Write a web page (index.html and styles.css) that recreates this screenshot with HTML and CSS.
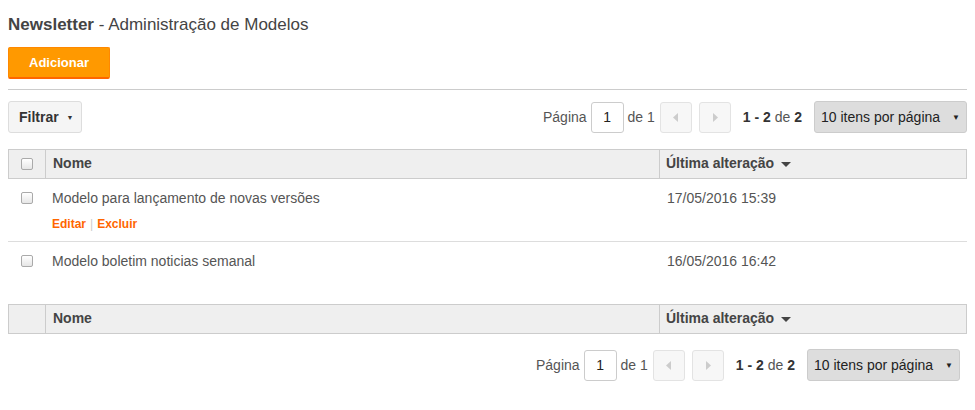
FILE: index.html
```html
<!DOCTYPE html>
<html>
<head>
<meta charset="utf-8">
<link rel="stylesheet" href="styles.css">
</head>
<body>
<h1 class="title"><b>Newsletter</b> - Administração de Modelos</h1>
<div class="actions"><button class="btn-primary">Adicionar</button></div>
<hr class="sep">
<div class="toolbar">
  <button class="btn-filter">Filtrar <span class="caret">▼</span></button>
  <div class="pager">
    <span>Página</span>
    <span class="page-input">1</span>
    <span>de 1</span>
    <span class="nav-btn"><svg width="6" height="9" viewBox="0 0 6 9"><path d="M5 0L0 4.5L5 9z" fill="#ccc"/></svg></span>
    <span class="nav-btn nav-next"><svg width="6" height="9" viewBox="0 0 6 9"><path d="M1 0L6 4.5L1 9z" fill="#ccc"/></svg></span>
    <span class="count"><b>1 - 2</b> de <b>2</b></span>
    <span class="per-page">10 itens por página <span class="sel-caret">▼</span></span>
  </div>
</div>
<div class="table">
  <div class="row head">
    <div class="c-check"><span class="cb"></span></div>
    <div class="c-name">Nome</div>
    <div class="c-date">Última alteração <svg class="sort" width="10" height="5" viewBox="0 0 10 5"><path d="M0 0H10L5 5z" fill="#444"/></svg></div>
  </div>
  <div class="row item">
    <div class="c-check"><span class="cb"></span></div>
    <div class="c-name">Modelo para lançamento de novas versões
      <div class="links"><a>Editar</a><span class="bar">|</span><a>Excluir</a></div>
    </div>
    <div class="c-date">17/05/2016 15:39</div>
  </div>
  <div class="row item last">
    <div class="c-check"><span class="cb"></span></div>
    <div class="c-name">Modelo boletim noticias semanal</div>
    <div class="c-date">16/05/2016 16:42</div>
  </div>
  <div class="row head foot">
    <div class="c-check"></div>
    <div class="c-name">Nome</div>
    <div class="c-date">Última alteração <svg class="sort" width="10" height="5" viewBox="0 0 10 5"><path d="M0 0H10L5 5z" fill="#444"/></svg></div>
  </div>
</div>
<div class="toolbar bottom">
  <div class="pager">
    <span>Página</span>
    <span class="page-input">1</span>
    <span>de 1</span>
    <span class="nav-btn"><svg width="6" height="9" viewBox="0 0 6 9"><path d="M5 0L0 4.5L5 9z" fill="#ccc"/></svg></span>
    <span class="nav-btn nav-next"><svg width="6" height="9" viewBox="0 0 6 9"><path d="M1 0L6 4.5L1 9z" fill="#ccc"/></svg></span>
    <span class="count"><b>1 - 2</b> de <b>2</b></span>
    <span class="per-page">10 itens por página <span class="sel-caret">▼</span></span>
  </div>
</div>
</body>
</html>
```
FILE: styles.css
```css
* { box-sizing: border-box; }
body {
  margin: 8px;
  font-family: "Liberation Sans", Arial, sans-serif;
  font-size: 14px;
  color: #444;
  background: #fff;
}
.title {
  margin: 6px 0 0;
  font-size: 17px;
  font-weight: normal;
  line-height: 22px;
  color: #444;
}
.title b { font-weight: bold; }
.actions { margin-top: 11px; }
.btn-primary {
  display: block;
  width: 102px;
  height: 32px;
  background: #f90;
  border: 1px solid #f80;
  border-bottom: 2px solid #f60;
  border-radius: 2px;
  color: #fff;
  font-family: inherit;
  font-weight: bold;
  font-size: 13px;
  padding: 0;
}
.sep {
  margin: 10px 0 0;
  border: 0;
  border-top: 1px solid #ccc;
}
.toolbar {
  display: flex;
  justify-content: space-between;
  align-items: center;
  margin-top: 11px;
  height: 32px;
}
.btn-filter {
  height: 32px;
  width: 74px;
  background: #f5f5f5;
  border: 1px solid #ddd;
  border-radius: 3px;
  font-family: inherit;
  font-weight: bold;
  font-size: 14px;
  color: #333;
  text-align: left;
  padding: 0 0 0 10px;
}
.caret { font-size: 7px; margin-left: 4px; vertical-align: 2px; }
.pager {
  display: flex;
  align-items: center;
  height: 32px;
  color: #555;
  margin-left: auto;
}
.page-input {
  width: 33px;
  height: 31px;
  border: 1px solid #ccc;
  border-radius: 3px;
  display: flex;
  align-items: center;
  justify-content: center;
  color: #222;
  margin: 0 4px;
}
.nav-btn {
  width: 32px;
  height: 31px;
  border: 1px solid #e3e3e3;
  border-radius: 3px;
  background: #f7f7f7;
  display: flex;
  align-items: center;
  justify-content: center;
  margin-left: 5px;
}
.nav-next { margin-left: 7px; }
.count { margin-left: 12px; color: #555; }
.count b { color: #333; }
.per-page {
  margin-left: 12px;
  width: 153px;
  height: 32px;
  background: #ddd;
  border: 1px solid #ccc;
  border-radius: 3px;
  display: flex;
  align-items: center;
  justify-content: space-between;
  padding: 0 6px;
  color: #222;
}
.sel-caret { font-size: 8px; }
.table { margin-top: 16px; }
.row { display: flex; }
.head {
  height: 30px;
  background: #efefef;
  border: 1px solid #ccc;
  align-items: center;
  font-weight: bold;
  color: #444;
}
.head .c-check, .head .c-name { border-right: 1px solid #ccc; height: 100%; }
.head .c-name, .head .c-date { padding-bottom: 2px; }
.c-check {
  width: 37px;
  display: flex;
  justify-content: center;
  align-items: center;
  flex: none;
}
.c-name { flex: 1; padding-left: 7px; display: flex; align-items: center; }
.c-date { width: 306px; flex: none; padding-left: 6px; display: flex; align-items: center; }
.sort { margin-left: 7px; margin-top: 2px; }
.cb {
  width: 12px;
  height: 12px;
  border: 1px solid #aaa;
  border-radius: 2px;
  background: linear-gradient(#fff, #e6e6e6);
  display: block;
}
.item {
  border-bottom: 1px solid #ddd;
  align-items: flex-start;
  padding-top: 11px;
  color: #555;
}
.item .c-name { display: block; padding-left: 7px; line-height: 16px; }
.item .c-check { padding-top: 2px; }
.item .c-date { line-height: 16px; padding-left: 6px; }
.row.item:nth-child(2) { height: 63px; }
.row.item.last { height: 51px; border-bottom: none; padding-top: 11px; }
.links { margin-top: 10px; font-size: 12px; font-weight: bold; }
.links a { color: #f60; }
.bar { color: #ccc; font-weight: normal; margin: 0 4px; }
.foot { margin-top: 11px; }
.toolbar.bottom { margin-top: 15px; margin-right: 7px; justify-content: flex-end; }
```
